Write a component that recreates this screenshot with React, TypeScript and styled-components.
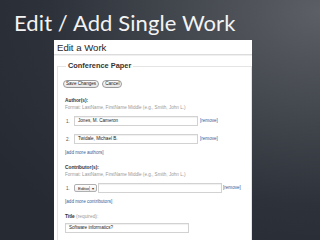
import React from 'react';
import styled, { createGlobalStyle } from 'styled-components';

const GlobalStyle = createGlobalStyle`
  html, body {
    margin: 0;
    padding: 0;
  }
  body {
    width: 320px;
    height: 240px;
    overflow: hidden;
    background: radial-gradient(ellipse at 100% 5%, #5c5f65 0%, #44484f 30%, #2d323a 60%, #262a32 85%);
    font-family: "Liberation Sans", Arial, sans-serif;
  }
`;

const Slide = styled.div`
  width: 320px;
  height: 240px;
  display: flex;
  flex-direction: column;
`;

const SlideTitle = styled.h1`
  margin: 0;
  height: 40px;
  padding-left: 14px;
  font-family: Lato, "Open Sans", sans-serif;
  font-weight: 400;
  font-size: 22px;
  line-height: 46px;
  color: #f3f3f3;
  letter-spacing: 0.1px;
`;

const Panel = styled.div`
  margin-left: 54px;
  width: 198px;
  height: 200px;
  background: #fff;
  overflow: hidden;
`;

const PanelHeader = styled.div`
  height: 14px;
  padding-left: 3px;
  font-size: 9.6px;
  line-height: 15px;
  color: #1e1e1e;
  border-bottom: 1px solid #dcdcdc;
  box-shadow: 0 1px 0 #f0f0f0;
`;

const Box = styled.fieldset`
  margin: 7px 0 0 3px;
  padding: 0 0 0 7px;
  border: 1px solid #e4e4e4;
  border-bottom: none;
  height: 200px;
`;

const Legend = styled.legend`
  margin-left: 1px;
  padding: 0 2px;
  font-size: 7.4px;
  line-height: 8px;
  font-weight: bold;
  color: #333;
`;

const ButtonRow = styled.div`
  display: flex;
  gap: 3px;
  margin-top: 10px;
  margin-left: -2px;
`;

const PillButton = styled.button`
  height: 8px;
  padding: 0 2px;
  border: 1px solid #9a9a9a;
  border-radius: 4px;
  background: linear-gradient(#fdfdfd, #e6e6e6);
  font-family: "Liberation Sans", Arial, sans-serif;
  font-size: 4.6px;
  line-height: 6px;
  color: #222;
`;

const Label = styled.div<{ $gap: number }>`
  margin-top: ${p => p.$gap}px;
  font-size: 4.8px;
  line-height: 6px;
  font-weight: bold;
  color: #333;
`;

const Hint = styled.span`
  font-weight: normal;
  color: #999;
`;

const Format = styled.div`
  margin-top: 1px;
  font-size: 4.6px;
  line-height: 6px;
  color: #9a9a9a;
`;

const Row = styled.div<{ $gap: number }>`
  display: flex;
  align-items: center;
  margin-top: ${p => p.$gap}px;
  height: 10px;
`;

const Num = styled.span`
  width: 8px;
  padding-left: 1px;
  font-size: 4.6px;
  color: #555;
`;

const Field = styled.div<{ $w: number }>`
  box-sizing: border-box;
  width: ${p => p.$w}px;
  height: 10px;
  border: 1px solid #d2d2d2;
  box-shadow: inset 0 1px 1px #f0f0f0;
  padding-left: 3px;
  font-size: 4.6px;
  line-height: 8px;
  color: #222;
`;

const Select = styled.div`
  box-sizing: border-box;
  width: 23px;
  height: 8px;
  margin-right: 1px;
  border: 1px solid #b0b0b0;
  border-radius: 2px;
  background: linear-gradient(#fff, #ececec);
  display: flex;
  align-items: center;
  justify-content: space-between;
  padding: 0 1px 0 3px;
  font-size: 4.4px;
  color: #222;
`;

const Arrow = styled.span`
  width: 5px;
  height: 5px;
  border-left: 1px solid #c4c4c4;
  font-size: 4px;
  line-height: 5px;
  text-align: center;
  color: #333;
`;

const Link = styled.span<{ $left?: number }>`
  margin-left: ${p => p.$left ?? 0}px;
  font-size: 4.6px;
  line-height: 6px;
  color: #3b5a94;
`;

const LinkLine = styled.div<{ $gap: number }>`
  margin-top: ${p => p.$gap}px;
  font-size: 4.6px;
  line-height: 6px;
  color: #3b5a94;
`;

export default function App() {
  return (
    <Slide>
      <GlobalStyle />
      <SlideTitle>Edit / Add Single Work</SlideTitle>
      <Panel>
        <PanelHeader>Edit a Work</PanelHeader>
        <Box>
          <Legend>Conference Paper</Legend>
          <ButtonRow>
            <PillButton>Save Changes</PillButton>
            <PillButton>Cancel</PillButton>
          </ButtonRow>

          <Label $gap={10}>Author(s):</Label>
          <Format>Format: LastName, FirstName Middle (e.g., Smith, John L.)</Format>
          <Row $gap={5}>
            <Num>1.</Num>
            <Field $w={124}>Jones, M. Cameron</Field>
            <Link $left={2}>[remove]</Link>
          </Row>
          <Row $gap={8}>
            <Num>2.</Num>
            <Field $w={124}>Twidale, Michael B.</Field>
            <Link $left={2}>[remove]</Link>
          </Row>
          <LinkLine $gap={6}>[add more authors]</LinkLine>

          <Label $gap={9}>Contributor(s):</Label>
          <Format>Format: LastName, FirstName Middle (e.g., Smith, John L.)</Format>
          <Row $gap={5}>
            <Num>1.</Num>
            <Select>
              Editor
              <Arrow>▾</Arrow>
            </Select>
            <Field $w={124} />
            <Link $left={1}>[remove]</Link>
          </Row>
          <LinkLine $gap={6}>[add more contributors]</LinkLine>

          <Label $gap={9}>
            Title <Hint>(required):</Hint>
          </Label>
          <Row $gap={3}>
            <Field $w={124}>Software informatics?</Field>
          </Row>
        </Box>
      </Panel>
    </Slide>
  );
}
